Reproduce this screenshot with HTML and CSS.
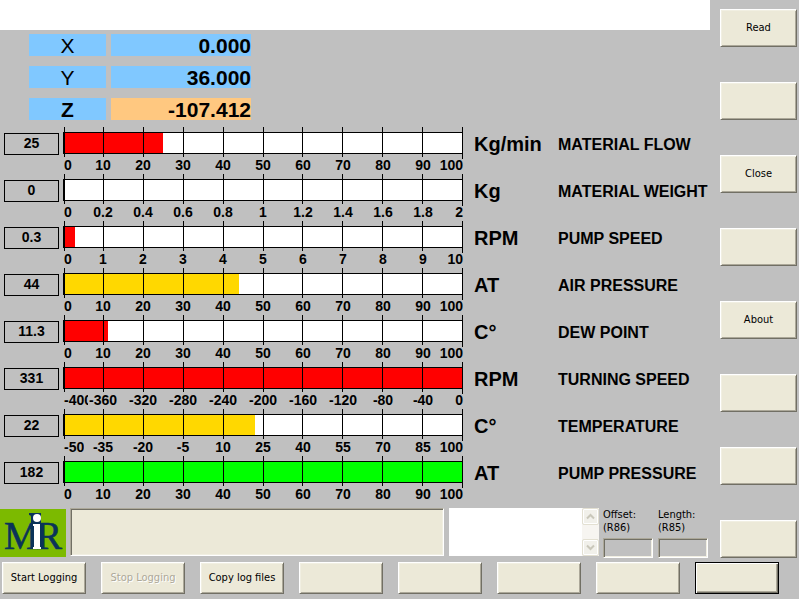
FILE: index.html
```html
<!DOCTYPE html>
<html lang="en">
<head>
<meta charset="utf-8">
<title>MiR Process Monitor</title>
<link rel="stylesheet" href="styles.css">
</head>
<body>
<svg class="defs" aria-hidden="true">
  <symbol id="ticks" viewBox="0 0 400 32" preserveAspectRatio="none">
    <path d="M1.5 0V30M40.5 0V30M80.5 0V30M120.5 0V30M160.5 0V30M200.5 0V30M239.5 0V30M279.5 0V30M319.5 0V30M359.5 0V30M399.5 0V32" fill="none" stroke="#000" shape-rendering="crispEdges"/>
  </symbol>
</svg>
<div class="top">
  <main class="main">
    <header class="banner"></header>
    <dl class="axes">
      <dt>X</dt><dd>0.000</dd>
      <dt>Y</dt><dd>36.000</dd>
      <dt class="selected">Z</dt><dd class="active">-107.412</dd>
    </dl>
    <section class="gauges">
      <div class="gauge">
        <output class="value">25</output>
        <div class="plot"><div class="bar"><div class="fill red" style="width:24.7%"></div></div><svg class="ticks"><use href="#ticks"/></svg>
          <div class="scale"><span>0</span><span>10</span><span>20</span><span>30</span><span>40</span><span>50</span><span>60</span><span>70</span><span>80</span><span>90</span><span>100</span></div></div>
        <span class="unit">Kg/min</span><span class="name">MATERIAL FLOW</span>
      </div>
      <div class="gauge">
        <output class="value">0</output>
        <div class="plot"><div class="bar"><div class="fill red" style="width:0%"></div></div><svg class="ticks"><use href="#ticks"/></svg>
          <div class="scale"><span>0</span><span>0.2</span><span>0.4</span><span>0.6</span><span>0.8</span><span>1</span><span>1.2</span><span>1.4</span><span>1.6</span><span>1.8</span><span>2</span></div></div>
        <span class="unit">Kg</span><span class="name">MATERIAL WEIGHT</span>
      </div>
      <div class="gauge">
        <output class="value">0.3</output>
        <div class="plot"><div class="bar"><div class="fill red" style="width:2.6%"></div></div><svg class="ticks"><use href="#ticks"/></svg>
          <div class="scale"><span>0</span><span>1</span><span>2</span><span>3</span><span>4</span><span>5</span><span>6</span><span>7</span><span>8</span><span>9</span><span>10</span></div></div>
        <span class="unit">RPM</span><span class="name">PUMP SPEED</span>
      </div>
      <div class="gauge">
        <output class="value">44</output>
        <div class="plot"><div class="bar"><div class="fill amber" style="width:43.9%"></div></div><svg class="ticks"><use href="#ticks"/></svg>
          <div class="scale"><span>0</span><span>10</span><span>20</span><span>30</span><span>40</span><span>50</span><span>60</span><span>70</span><span>80</span><span>90</span><span>100</span></div></div>
        <span class="unit">AT</span><span class="name">AIR PRESSURE</span>
      </div>
      <div class="gauge">
        <output class="value">11.3</output>
        <div class="plot"><div class="bar"><div class="fill red" style="width:10.9%"></div></div><svg class="ticks"><use href="#ticks"/></svg>
          <div class="scale"><span>0</span><span>10</span><span>20</span><span>30</span><span>40</span><span>50</span><span>60</span><span>70</span><span>80</span><span>90</span><span>100</span></div></div>
        <span class="unit">C°</span><span class="name">DEW POINT</span>
      </div>
      <div class="gauge">
        <output class="value">331</output>
        <div class="plot"><div class="bar"><div class="fill red" style="width:100%"></div></div><svg class="ticks"><use href="#ticks"/></svg>
          <div class="scale"><span>-400</span><span>-360</span><span>-320</span><span>-280</span><span>-240</span><span>-200</span><span>-160</span><span>-120</span><span>-80</span><span>-40</span><span>0</span></div></div>
        <span class="unit">RPM</span><span class="name">TURNING SPEED</span>
      </div>
      <div class="gauge">
        <output class="value">22</output>
        <div class="plot"><div class="bar"><div class="fill amber" style="width:47.9%"></div></div><svg class="ticks"><use href="#ticks"/></svg>
          <div class="scale"><span>-50</span><span>-35</span><span>-20</span><span>-5</span><span>10</span><span>25</span><span>40</span><span>55</span><span>70</span><span>85</span><span>100</span></div></div>
        <span class="unit">C°</span><span class="name">TEMPERATURE</span>
      </div>
      <div class="gauge">
        <output class="value">182</output>
        <div class="plot"><div class="bar"><div class="fill green" style="width:100%"></div></div><svg class="ticks"><use href="#ticks"/></svg>
          <div class="scale"><span>0</span><span>10</span><span>20</span><span>30</span><span>40</span><span>50</span><span>60</span><span>70</span><span>80</span><span>90</span><span>100</span></div></div>
        <span class="unit">AT</span><span class="name">PUMP PRESSURE</span>
      </div>
    </section>
    <section class="status">
      <svg class="logo" viewBox="0 0 66 48" role="img" aria-label="MiR">
        <rect width="66" height="48" fill="#7cba00"/>
        <path d="M29 4H40V40H31V8Q31 6 29 6Z" fill="#0a3359"/>
        <g font-family="Liberation Serif, serif" font-size="39" fill="#0a3359" stroke="#0a3359" stroke-width=".6">
          <text x="4" y="40">M</text><text x="36" y="40">R</text>
        </g>
        <path d="M31 4H41V40H31Z" fill="#0a3359"/>
        <circle cx="37" cy="9" r="4" fill="#fff"/>
        <path d="M33 15H40V38H41V40H33V38H34V17H33Z" fill="#fff"/>
      </svg>
      <div class="message"></div>
      <div class="log">
        <textarea aria-label="Log"></textarea>
        <div class="scrollbar">
          <button type="button" aria-label="Scroll up" disabled><svg viewBox="0 0 9 7"><path d="M1 5.5L4.500 2L8 5.500" /></svg></button>
          <button type="button" aria-label="Scroll down" disabled><svg viewBox="0 0 9 7"><path d="M1 1.500L4.500 5L8 1.500" /></svg></button>
        </div>
      </div>
      <label class="field">Offset:<br>(R86)<input type="text"></label>
      <label class="field">Length:<br>(R85)<input type="text"></label>
    </section>
  </main>
  <nav class="side">
    <button type="button">Read</button>
    <button type="button" aria-label="Unassigned"></button>
    <button type="button">Close</button>
    <button type="button" aria-label="Unassigned"></button>
    <button type="button">About</button>
    <button type="button" aria-label="Unassigned"></button>
    <button type="button" aria-label="Unassigned"></button>
    <button type="button" aria-label="Unassigned"></button>
  </nav>
</div>
<footer class="actions">
  <button type="button">Start Logging</button>
  <button type="button" disabled>Stop Logging</button>
  <button type="button">Copy log files</button>
  <button type="button" aria-label="Unassigned"></button>
  <button type="button" aria-label="Unassigned"></button>
  <button type="button" aria-label="Unassigned"></button>
  <button type="button" aria-label="Unassigned"></button>
  <button type="button" class="default" aria-label="Unassigned"></button>
</footer>
</body>
</html>
```

FILE: styles.css
```css
* { box-sizing: border-box; }

body {
  margin: 0;
  background: #c0c0c0;
  color: #000;
  font: 11px/13px Tahoma, "DejaVu Sans Condensed", "Noto Sans", sans-serif;
}

.defs { position: absolute; width: 0; height: 0; }

.top { display: flex; }
.main { flex: 1; min-width: 0; }

.banner { height: 30px; background: #fff; }

/* Axis readout */
.axes {
  display: grid;
  grid-template-columns: 77px 140px;
  gap: 10px 5px;
  margin: 4px 0 7px 29px;
  font: 21px/24px "Liberation Sans", Arial, sans-serif;
}
.axes dt, .axes dd { height: 22px; margin: 0; background: #80c8ff; }
.axes dt { text-align: center; }
.axes dd { text-align: right; font-weight: bold; }
.axes .selected { font-weight: bold; }
.axes .active { background: #ffc880; }

/* Gauges */
.gauge {
  display: grid;
  grid-template-columns: 55px minmax(0, 1fr) 84px 152px;
  margin-left: 4px;
  height: 47px;
  font: bold 14px/14px "Liberation Sans", Arial, sans-serif;
}
.value {
  height: 22px;
  margin-top: 6px;
  border: 1px solid #000;
  line-height: 18px;
  text-align: center;
}
.plot { position: relative; margin: 0 11px 0 4px; padding-top: 5px; }
.bar {
  height: 22px;
  border: solid #000;
  border-width: 1px 1px 1px 2px;
  background: #fff;
}
.fill { height: 100%; }
.red { background: #f00; }
.amber { background: #ffd800; }
.green { background: #0f0; }
.ticks { position: absolute; top: 0; left: 0; width: 100%; height: 32px; }
.scale {
  display: grid;
  grid-template-columns: repeat(20, minmax(0, 1fr));
  margin-top: 4px;
}
.scale span { grid-column: span 2; justify-self: center; background: #c0c0c0; }
.scale span:first-child { grid-column: span 1; justify-self: start; max-width: 25px; padding-left: 1px; overflow: hidden; }
.scale span:last-child { grid-column: span 1; justify-self: end; }
.unit, .name { line-height: 34px; white-space: nowrap; }
.unit { font-size: 20px; }
.name { font-size: 16px; line-height: 36px; }

/* Status strip */
.status { display: flex; margin-top: 5px; height: 50px; }
.logo { width: 66px; height: 48px; margin: 1px 4px 0 0; }
.message {
  flex: 1;
  height: 48px;
  background: #ece9d8;
  border: 1px solid;
  border-color: #aca899 #fff #fff #aca899;
  box-shadow: inset 1px 1px #716f64, inset -1px -1px #f1efe2;
}
.log { display: flex; width: 150px; height: 48px; margin: 0 4px 0 5px; background: #fff; }
.log textarea { flex: 1; min-width: 0; border: 0; padding: 2px; resize: none; background: #fff; font: inherit; }
.scrollbar {
  display: flex;
  flex-direction: column;
  justify-content: space-between;
  width: 17px;
  background: #f7f5f1;
}
.scrollbar button {
  display: flex;
  align-items: center;
  justify-content: center;
  height: 17px;
  margin: 0;
  padding: 0;
  border: 1px solid #e3e0d2;
  border-radius: 2px;
  background: #f1f0ea;
  box-shadow: inset 0 0 0 1px #fff;
}
.scrollbar svg { width: 9px; height: 7px; fill: none; stroke: #c9c7ba; stroke-width: 2; }
.field { width: 50px; margin-right: 5px; }
.field:last-child { margin-right: 2px; }
.field input {
  display: block;
  width: 100%;
  height: 20px;
  margin-top: 4px;
  padding: 0 2px;
  background: #c0c0c0;
  border: 1px solid;
  border-color: #aca899 #fff #fff #aca899;
  box-shadow: inset 1px 1px #716f64, inset -1px -1px #f1efe2;
  font: inherit;
}

/* Push buttons */
.side { display: grid; grid-auto-rows: 38px; gap: 35px; width: 89px; padding: 9px 2px 4px 10px; }
.actions { display: flex; gap: 15px; padding: 0 0 0 2px; }
.side button, .actions button {
  padding: 0 0 1px;
  border: 1px solid;
  border-color: #fff #716f64 #716f64 #fff;
  box-shadow: inset 1px 1px #f1efe2, inset -1px -1px #aca899;
  background: #ece9d8;
  color: #000;
  font: inherit;
}
.actions button { width: 84px; height: 32px; }
.actions button:disabled { color: #aca899; text-shadow: 1px 1px #fff; }
.actions .default {
  border-color: #000;
  box-shadow: inset 1px 1px #fff, inset -1px -1px #716f64, inset -2px -2px #aca899;
}
```
